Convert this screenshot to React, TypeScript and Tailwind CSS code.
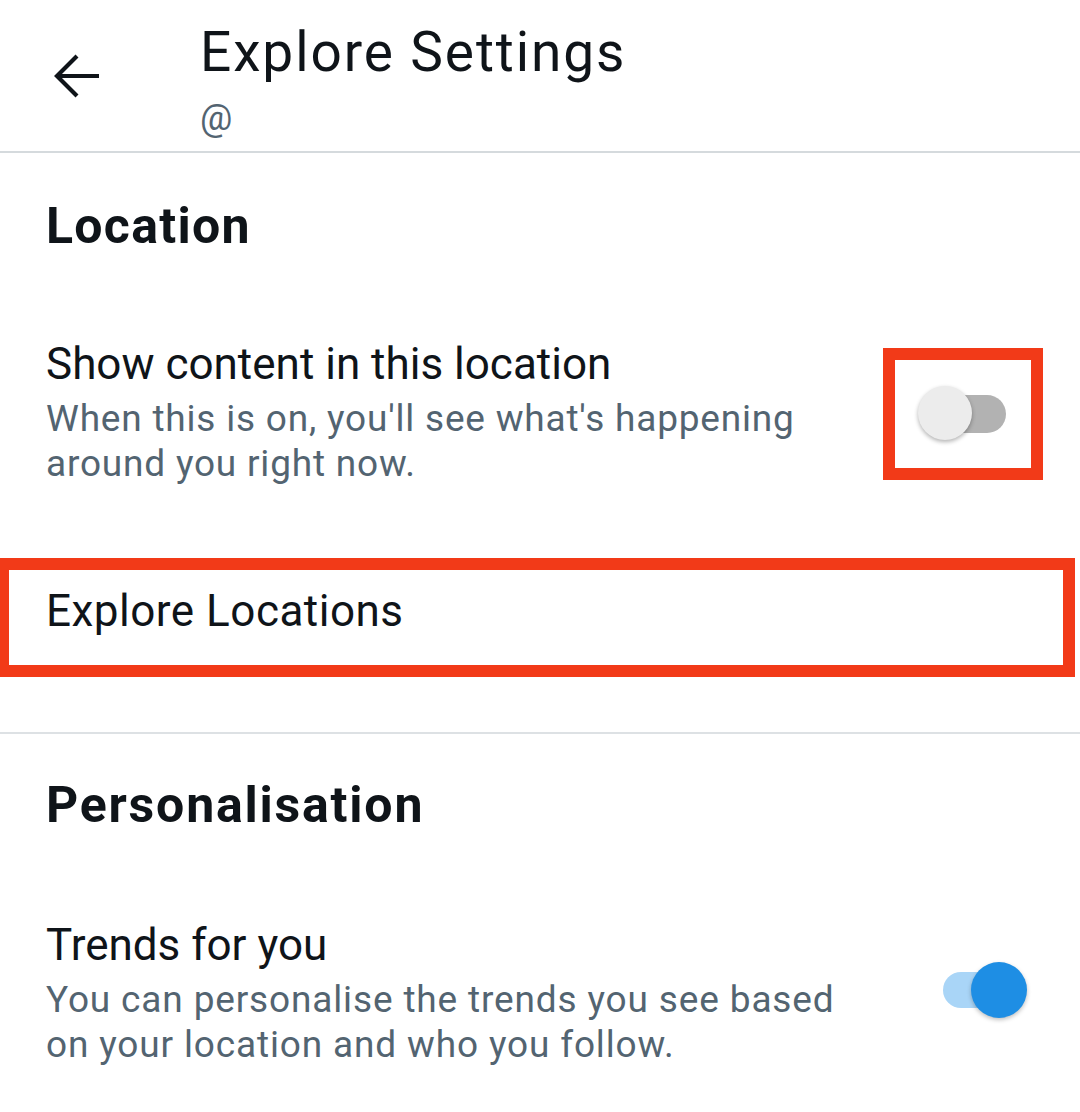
import React from 'react';

function BackArrow() {
  return (
    <svg width="48" height="48" viewBox="0 0 48 48" fill="none" stroke="#0f1419" strokeWidth="4.2" strokeLinecap="butt" strokeLinejoin="miter">
      <path d="M3 24h42" />
      <path d="M23 4L3 24l20 20" />
    </svg>
  );
}

function Toggle({ on }: { on: boolean }) {
  if (on) {
    return (
      <div className="relative w-[90px] h-[56px] flex items-center">
        <div className="ml-[6px] w-[76px] h-[36px] rounded-full bg-[#a9d5f7]" />
        <div className="absolute right-0 top-0 w-[56px] h-[56px] rounded-full bg-[#1e8ee4] shadow-[0_2px_4px_rgba(0,0,0,0.25)]" />
      </div>
    );
  }
  return (
    <div className="relative w-[90px] h-[56px] flex items-center">
      <div className="ml-[12px] w-[76px] h-[38px] rounded-full bg-[#b2b2b2]" />
      <div className="absolute left-0 top-0 w-[54px] h-[54px] rounded-full bg-[#ececec] shadow-[0_2px_4px_rgba(0,0,0,0.3)]" />
    </div>
  );
}

export default function App() {
  return (
    <div className="w-[1080px] h-[1112px] overflow-hidden bg-white text-[#0f1419] font-['Roboto',sans-serif]">
      {/* Header */}
      <div className="h-[153px] border-b-2 border-[#d5dadd] flex items-start">
        <div className="w-[200px] pl-[54px] pt-[52px]">
          <BackArrow />
        </div>
        <div className="pt-[20px]">
          <h1 className="text-[55px] leading-[64px] font-normal tracking-[1.9px]">Explore Settings</h1>
          <p className="text-[36px] leading-[40px] text-[#536471] mt-[14px]">@</p>
        </div>
      </div>

      {/* Location */}
      <div className="pl-[46px] pt-[44px]">
        <h2 className="text-[50px] leading-[58px] font-bold tracking-[1.3px]">Location</h2>
      </div>

      <div className="flex items-start justify-between pl-[46px] pr-[37px] mt-[83px]">
        <div>
          <p className="text-[44px] leading-[52px]">Show content in this location</p>
          <p className="text-[37px] leading-[45px] tracking-[0.8px] text-[#536471] mt-[6px]">
            When this is on, you'll see what's happening
            <br />
            around you right now.
          </p>
        </div>
        <div className="mt-[10px] w-[160px] h-[132px] border-[12px] border-[#f23a18] flex items-center justify-center">
          <Toggle on={false} />
        </div>
      </div>

      <div className="mt-[72px] mr-[5px] h-[119px] border-[12px] border-l-[9px] border-[#f23a18] pl-[37px] pt-[15px]">
        <p className="text-[44px] leading-[52px] tracking-[0.5px]">Explore Locations</p>
      </div>

      <div className="mt-[55px] border-t-2 border-[#dde1e4]" />

      {/* Personalisation */}
      <div className="pl-[46px] pt-[42px]">
        <h2 className="text-[50px] leading-[58px] font-bold tracking-[1.8px]">Personalisation</h2>
      </div>

      <div className="flex items-start justify-between pl-[46px] pr-[53px] mt-[85px]">
        <div>
          <p className="text-[44px] leading-[52px]">Trends for you</p>
          <p className="text-[37px] leading-[45px] tracking-[0.85px] text-[#536471] mt-[6px]">
            You can personalise the trends you see based
            <br />
            on your location and who you follow.
          </p>
        </div>
        <div className="mt-[43px]">
          <Toggle on={true} />
        </div>
      </div>
    </div>
  );
}
